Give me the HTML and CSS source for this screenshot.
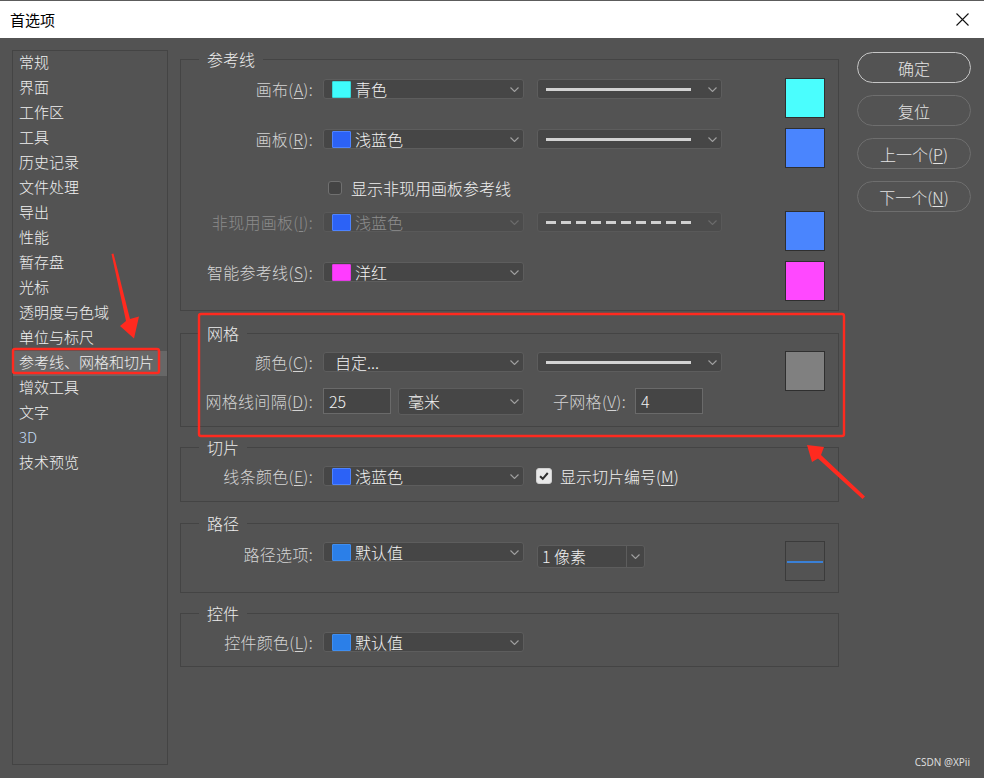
FILE: index.html
```html
<!DOCTYPE html>
<html lang="zh-CN">
<head>
<meta charset="utf-8">
<title>首选项</title>
<link rel="stylesheet" href="styles.css">
</head>
<body>
<header class="titlebar">
  <span class="title">首选项</span>
  <svg class="close" viewBox="0 0 13 13"><path d="M0.5 0.5L12.5 12.5M12.5 0.5L0.5 12.5"/></svg>
</header>

<div class="main">
  <nav class="sidebar">
    <div class="nav-item">常规</div>
    <div class="nav-item">界面</div>
    <div class="nav-item">工作区</div>
    <div class="nav-item">工具</div>
    <div class="nav-item">历史记录</div>
    <div class="nav-item">文件处理</div>
    <div class="nav-item">导出</div>
    <div class="nav-item">性能</div>
    <div class="nav-item">暂存盘</div>
    <div class="nav-item">光标</div>
    <div class="nav-item">透明度与色域</div>
    <div class="nav-item">单位与标尺</div>
    <div class="nav-item active">参考线、网格和切片</div>
    <div class="nav-item">增效工具</div>
    <div class="nav-item">文字</div>
    <div class="nav-item blue">3D</div>
    <div class="nav-item">技术预览</div>
  </nav>

  <div class="content">
    <fieldset class="group guides">
      <legend>参考线</legend>
      <div class="row">
        <label class="lbl">画布(<u>A</u>):</label>
        <div class="select sel-color"><span class="chip c-cyan"></span><span class="val">青色</span><svg class="chev" viewBox="0 0 9 5"><path d="M0.5 0.5L4.5 4.5L8.5 0.5"/></svg></div>
        <div class="select sel-line"><span class="stroke solid"></span><svg class="chev" viewBox="0 0 9 5"><path d="M0.5 0.5L4.5 4.5L8.5 0.5"/></svg></div>
        <div class="swatch s-cyan"></div>
      </div>
      <div class="row">
        <label class="lbl">画板(<u>R</u>):</label>
        <div class="select sel-color"><span class="chip c-blue"></span><span class="val">浅蓝色</span><svg class="chev" viewBox="0 0 9 5"><path d="M0.5 0.5L4.5 4.5L8.5 0.5"/></svg></div>
        <div class="select sel-line"><span class="stroke solid"></span><svg class="chev" viewBox="0 0 9 5"><path d="M0.5 0.5L4.5 4.5L8.5 0.5"/></svg></div>
        <div class="swatch s-blue"></div>
      </div>
      <div class="check-row">
        <span class="checkbox"></span>
        <span class="check-text">显示非现用画板参考线</span>
      </div>
      <div class="row disabled">
        <label class="lbl">非现用画板(<u>I</u>):</label>
        <div class="select sel-color"><span class="chip c-blue"></span><span class="val">浅蓝色</span><svg class="chev" viewBox="0 0 9 5"><path d="M0.5 0.5L4.5 4.5L8.5 0.5"/></svg></div>
        <div class="select sel-line"><span class="stroke dashed"></span><svg class="chev" viewBox="0 0 9 5"><path d="M0.5 0.5L4.5 4.5L8.5 0.5"/></svg></div>
        <div class="swatch s-blue"></div>
      </div>
      <div class="row">
        <label class="lbl">智能参考线(<u>S</u>):</label>
        <div class="select sel-color"><span class="chip c-magenta"></span><span class="val">洋红</span><svg class="chev" viewBox="0 0 9 5"><path d="M0.5 0.5L4.5 4.5L8.5 0.5"/></svg></div>
        <div class="swatch s-magenta"></div>
      </div>
    </fieldset>

    <fieldset class="group grid">
      <legend>网格</legend>
      <div class="grid-body">
        <div class="grid-rows">
          <div class="row-thin">
            <label class="lbl">颜色(<u>C</u>):</label>
            <div class="select sel-color"><span class="val plain">自定...</span><svg class="chev" viewBox="0 0 9 5"><path d="M0.5 0.5L4.5 4.5L8.5 0.5"/></svg></div>
            <div class="select sel-line"><span class="stroke solid"></span><svg class="chev" viewBox="0 0 9 5"><path d="M0.5 0.5L4.5 4.5L8.5 0.5"/></svg></div>
          </div>
          <div class="row-spacing">
            <label class="lbl">网格线间隔(<u>D</u>):</label>
            <div class="spacing">
              <div class="input">25</div>
              <div class="select sel-unit"><span class="val">毫米</span><svg class="chev" viewBox="0 0 9 5"><path d="M0.5 0.5L4.5 4.5L8.5 0.5"/></svg></div>
            </div>
            <div class="sub">
              <label class="sub-lbl">子网格(<u>V</u>):</label>
              <div class="input">4</div>
            </div>
          </div>
        </div>
        <div class="swatch s-gray"></div>
      </div>
    </fieldset>

    <fieldset class="group slices">
      <legend>切片</legend>
      <div class="row-thin">
        <label class="lbl">线条颜色(<u>E</u>):</label>
        <div class="select sel-color"><span class="chip c-blue"></span><span class="val">浅蓝色</span><svg class="chev" viewBox="0 0 9 5"><path d="M0.5 0.5L4.5 4.5L8.5 0.5"/></svg></div>
        <span class="checkbox checked"><svg viewBox="0 0 16 16"><path d="M3.5 8.2L6.6 11.2L12.3 4.6"/></svg></span>
        <span class="check-text">显示切片编号(<u>M</u>)</span>
      </div>
    </fieldset>

    <fieldset class="group path">
      <legend>路径</legend>
      <div class="row">
        <label class="lbl">路径选项:</label>
        <div class="select sel-color"><span class="chip c-default"></span><span class="val">默认值</span><svg class="chev" viewBox="0 0 9 5"><path d="M0.5 0.5L4.5 4.5L8.5 0.5"/></svg></div>
        <div class="combo"><span class="combo-val">1 像素</span><span class="combo-btn"><svg class="chev" viewBox="0 0 9 5"><path d="M0.5 0.5L4.5 4.5L8.5 0.5"/></svg></span></div>
        <div class="swatch s-path"><span class="path-line"></span></div>
      </div>
    </fieldset>

    <fieldset class="group controls">
      <legend>控件</legend>
      <div class="row-thin">
        <label class="lbl">控件颜色(<u>L</u>):</label>
        <div class="select sel-color"><span class="chip c-default"></span><span class="val">默认值</span><svg class="chev" viewBox="0 0 9 5"><path d="M0.5 0.5L4.5 4.5L8.5 0.5"/></svg></div>
      </div>
    </fieldset>
  </div>

  <div class="buttons">
    <button class="btn primary">确定</button>
    <button class="btn">复位</button>
    <button class="btn">上一个(<u>P</u>)</button>
    <button class="btn">下一个(<u>N</u>)</button>
  </div>
</div>

<svg class="annotations" viewBox="0 0 984 778">
  <rect x="13" y="349" width="146" height="24" rx="2"/>
  <rect x="199" y="314" width="645" height="122" rx="2"/>
  <polygon class="arrow" points="111.5,254 126,321 120,326 134,338.5 139,316.5 130,319 113.5,253.5"/>
  <polygon class="arrow" points="865,496.5 821,455 824,447 807,445 812,462 818,458.5 862.5,499"/>
</svg>

<div class="watermark">CSDN @XPii</div>
</body>
</html>
```

FILE: styles.css
```css
* { box-sizing: border-box; }

html, body { margin: 0; padding: 0; }

body {
  width: 984px;
  height: 778px;
  position: relative;
  overflow: hidden;
  background: #535353;
  font-family: "Noto Sans CJK SC", "Noto Sans", sans-serif;
  font-size: 15px;
  line-height: 20px;
  color: #d4d4d4;
}

u { text-decoration: underline; text-underline-offset: 2px; text-decoration-thickness: 1px; }

/* title bar */
.titlebar {
  height: 38px;
  background: #ffffff;
  border-top: 1px solid #5c5c5c;
  display: flex;
  align-items: center;
  justify-content: space-between;
  padding: 0 15px 0 10px;
}
.title { color: #000; font-size: 15px; }
.close { width: 13px; height: 13px; }
.close path { stroke: #111; stroke-width: 1.1; fill: none; }

/* layout */
.main {
  display: flex;
  align-items: flex-start;
  padding: 12px 0 0 12px;
}

.sidebar {
  flex: none;
  width: 156px;
  height: 715px;
  border: 1px solid #444444;
  font-weight: 300;
}
.nav-item {
  height: 25px;
  line-height: 21px;
  padding-left: 6px;
  color: #f0f0f0;
  white-space: nowrap;
}
.nav-item.active { background: #676767; }
.nav-item.blue { color: #c3dcf6; }

.content {
  flex: none;
  width: 659px;
  margin-left: 12px;
  font-size: 16px;
  font-weight: 300;
}

/* groups */
.group {
  margin: 0;
  padding: 0;
  min-width: 0;
  border: 1px solid #444444;
}
.group legend {
  margin-left: 18px;
  padding: 0 8px;
  line-height: 18px;
  color: #ececec;
}
.guides { padding: 10px 0 9px; }
.grid { margin-top: 13px; padding: 10px 0 11px; }
.slices { margin-top: 11px; padding: 10px 0 15px; }
.path { margin-top: 12px; padding: 9px 0 11px; }
.controls { margin-top: 11px; padding: 10px 0 14px; }

.row {
  display: flex;
  align-items: flex-start;
  height: 40px;
}
.guides .row + .row { margin-top: 10px; }
.guides .check-row + .row { margin-top: 13px; }

.lbl {
  flex: none;
  width: 132px;
  margin-right: 10px;
  text-align: right;
  white-space: nowrap;
  line-height: 20px;
  letter-spacing: 0.3px;
}
.row .lbl, .row .select.sel-color { margin-top: 1px; }
.row .select.sel-line { margin-top: 1px; }

.row-thin {
  display: flex;
  align-items: center;
  height: 20px;
}

/* selects */
.select {
  flex: none;
  display: flex;
  align-items: center;
  height: 20px;
  background: #464646;
  border: 1px solid #5d5d5d;
  border-radius: 3px;
  padding-right: 4px;
}
.sel-color { width: 201px; padding-left: 8px; }
.sel-line { width: 185px; margin-left: 13px; padding-left: 8px; }
.val { color: #f2f2f2; white-space: nowrap; line-height: 18px; }
.val.plain { padding-left: 3px; }
.chev {
  width: 9px;
  height: 5px;
  margin-left: auto;
  flex: none;
}
.chev path { fill: none; stroke: #a0a0a0; stroke-width: 1.1; }

.chip {
  flex: none;
  width: 19px;
  height: 17px;
  margin-right: 4px;
  border: 1px solid;
  border-radius: 1px;
}
.c-cyan { background: #3ffcfc; border-color: #37d6d6; }
.c-blue { background: #2c62f6; border-color: #4d83ff; }
.c-magenta { background: #ff3cff; border-color: #e23ae2; }
.c-default { background: #2b7fe8; border-color: #3f8ef0; }

.stroke { flex: none; width: 145px; height: 3px; }
.stroke.solid { background: #d2d2d2; }
.stroke.dashed {
  background: repeating-linear-gradient(to right, #d0d0d0 0 10px, transparent 10px 15px);
}

/* big swatches */
.swatch {
  flex: none;
  width: 40px;
  height: 40px;
  margin-left: auto;
  margin-right: 13px;
  border: 1px solid #2f2f2f;
}
.s-cyan { background: #4afefe; }
.s-blue { background: #4a85fe; }
.s-magenta { background: #ff48ff; }
.s-gray { background: #808080; margin-top: -1px; }
.s-path {
  background: #535353;
  border-color: #3b3b3b;
  display: flex;
  align-items: center;
  padding: 0 1px;
}
.path-line { flex: 1; height: 2px; background: #3a80d6; margin-top: 2px; }

/* disabled row */
.disabled .lbl { color: #8b8b8b; }
.disabled .select { background: #4c4c4c; border-color: #595959; }
.disabled .val { color: #8e8e8e; }
.disabled .chev path { stroke: #6c6c6c; }

/* checkbox */
.check-row {
  display: flex;
  align-items: center;
  height: 20px;
  margin-top: 10px;
  padding-left: 147px;
}
.checkbox {
  flex: none;
  width: 14px;
  height: 14px;
  border: 1px solid #707070;
  border-radius: 3px;
  background: #444444;
}
.check-text { margin-left: 9px; color: #efefef; white-space: nowrap; }
.checkbox.checked {
  width: 16px;
  height: 16px;
  margin-left: 12px;
  background: #e8e8e8;
  border-color: #cfcfcf;
  display: flex;
}
.checkbox.checked svg { width: 14px; height: 14px; }
.checkbox.checked path { fill: none; stroke: #2e2e2e; stroke-width: 2.3; }
.checkbox.checked + .check-text { margin-left: 8px; }

/* grid group */
.grid-body { display: flex; align-items: flex-start; }
.grid-rows { flex: none; }
.row-spacing {
  display: flex;
  align-items: center;
  height: 28px;
  margin-top: 15px;
}
.spacing { flex: none; width: 201px; display: flex; align-items: center; }
.input {
  flex: none;
  width: 68px;
  height: 26px;
  background: #454545;
  border: 1px solid #6a6a6a;
  padding-left: 5px;
  line-height: 24px;
  color: #f2f2f2;
}
.sel-unit {
  width: 126px;
  height: 27px;
  margin-left: 7px;
  padding-left: 9px;
}
.sub {
  flex: none;
  width: 185px;
  margin-left: 13px;
  padding-left: 16px;
  display: flex;
  align-items: center;
}
.sub-lbl { white-space: nowrap; margin-right: 9px; letter-spacing: 0.3px; }

/* path combo */
.combo {
  flex: none;
  display: flex;
  width: 108px;
  height: 23px;
  margin-left: 13px;
  margin-top: 4px;
  background: #464646;
  border: 1px solid #5d5d5d;
  border-radius: 3px;
}
.combo-val {
  flex: 1;
  padding-left: 4px;
  line-height: 21px;
  color: #f0f0f0;
  white-space: nowrap;
}
.combo-btn {
  flex: none;
  width: 18px;
  border-left: 1px solid #5d5d5d;
  display: flex;
  align-items: center;
  justify-content: center;
}
.combo-btn .chev { margin-left: 0; }
.path .lbl, .path .sel-color { margin-top: 3px; }

/* buttons */
.buttons {
  flex: none;
  width: 114px;
  margin-left: 18px;
  margin-top: 2px;
  display: flex;
  flex-direction: column;
  gap: 12px;
}
.btn {
  height: 31px;
  border-radius: 16px;
  border: 1px solid #6e6e6e;
  background: transparent;
  color: #e4e4e4;
  font-family: inherit;
  font-size: 16px;
  font-weight: 300;
  line-height: 20px;
  padding: 0;
}
.btn.primary { border: 1.5px solid #c6c6c6; }

/* annotations */
.annotations {
  position: absolute;
  left: 0;
  top: 0;
  width: 984px;
  height: 778px;
  pointer-events: none;
}
.annotations rect { fill: none; stroke: #ff2a1f; stroke-width: 2.4; }
.annotations .arrow { fill: #ff2a1f; stroke: none; }

.watermark {
  position: absolute;
  right: 14px;
  bottom: 10px;
  font-family: "Noto Sans", "Liberation Sans", sans-serif;
  font-size: 10px;
  line-height: 12px;
  color: #dcdcdc;
}
```
